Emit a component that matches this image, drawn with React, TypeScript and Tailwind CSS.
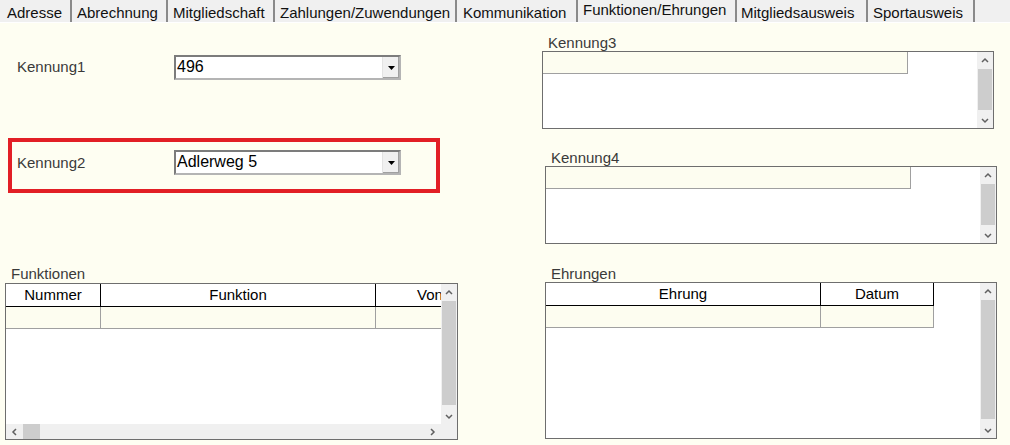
import React from 'react';

const tabs = [
  { label: 'Adresse', w: 'w-[72px]', pl: 'pl-[7px]' },
  { label: 'Abrechnung', w: 'w-[96px]', pl: 'pl-[5px]' },
  { label: 'Mitgliedschaft', w: 'w-[107px]', pl: 'pl-[5px]' },
  { label: 'Zahlungen/Zuwendungen', w: 'w-[182px]', pl: 'pl-[5px]' },
  { label: 'Kommunikation', w: 'w-[121px]', pl: 'pl-[6px]' },
  { label: 'Funktionen/Ehrungen', w: 'w-[159px]', pl: 'pl-[5px]', active: true },
  { label: 'Mitgliedsausweis', w: 'w-[131px]', pl: 'pl-[4px]' },
  { label: 'Sportausweis', w: 'w-[107px]', pl: 'pl-[5px]' },
];

const Chevron = ({ dir }: { dir: 'up' | 'down' | 'left' | 'right' }) => {
  const d = {
    up: 'M1 5 L4 2 L7 5',
    down: 'M1 2 L4 5 L7 2',
    left: 'M5 1 L2 4 L5 7',
    right: 'M2 1 L5 4 L2 7',
  }[dir];
  const size = dir === 'up' || dir === 'down' ? 'w-[8px] h-[7px]' : 'w-[7px] h-[8px]';
  return (
    <svg className={size} viewBox={dir === 'up' || dir === 'down' ? '0 0 8 7' : '0 0 7 8'} fill="none">
      <path d={d} stroke="#606060" strokeWidth={1.5} />
    </svg>
  );
};

// vertical scrollbar with arrows and a thumb
const VScroll = ({ thumb, gapTop = 'h-[1px]' }: { thumb: string; gapTop?: string }) => (
  <div className="flex w-[16px] shrink-0 flex-col bg-[#f0f0f0]">
    <div className="flex h-[16px] items-center justify-center">
      <Chevron dir="up" />
    </div>
    <div className={gapTop} />
    <div className={`mx-[1px] bg-[#cdcdcd] ${thumb}`} />
    <div className="flex-1" />
    <div className="flex h-[16px] items-center justify-center">
      <Chevron dir="down" />
    </div>
  </div>
);

const Combo = ({ value }: { value: string }) => (
  <div className="flex h-[25px] w-[227px] border-2 border-t-[#7c7c7c] border-l-[#7c7c7c] border-b-[#b4b4b4] border-r-[#b4b4b4] bg-white">
    <div className="flex-1 pl-[1px] text-[16px] leading-[20px] text-black">{value}</div>
    <div className="flex w-[17px] items-center justify-center border-l border-[#e3e3e3] bg-[#f0f0f0] shadow-[inset_-1px_-1px_0_#a0a0a0]">
      <svg className="h-[4px] w-[7px]" viewBox="0 0 7 4">
        <path d="M0 0 H7 L3.5 4 Z" fill="#000" />
      </svg>
    </div>
  </div>
);

const Caption = ({ text, cls }: { text: string; cls: string }) => (
  <div className={`text-[15px] leading-[17px] text-[#3a3a3a] ${cls}`}>{text}</div>
);

const KennungList = ({ cls }: { cls: string }) => (
  <div className={`flex h-[78px] w-[452px] border border-[#6e6e6e] bg-white ${cls}`}>
    <div className="flex-1">
      <div className="h-[22px] w-[365px] border-r border-b border-[#a0a0a0] bg-[#fdfdf0]" />
    </div>
    <VScroll thumb="h-[41px]" gapTop="h-[1px]" />
  </div>
);

export default function App() {
  return (
    <div
      className="h-[445px] w-[1010px] overflow-hidden bg-[#fefef2]"
      style={{ fontFamily: '"Liberation Sans", Arial, sans-serif' }}
    >
      {/* tab strip */}
      <div className="flex h-[23px] border-b border-white bg-[#f0f0f0]">
        {tabs.map((t) => (
          <div
            key={t.label}
            className={`${t.w} ${t.pl} flex h-[22px] shrink-0 border-r-2 border-r-[#8a8a8a] text-[15px] text-[#111] ${
              t.active ? 'items-start pt-[1px] leading-[17px]' : 'items-center pt-[2px] leading-[17px]'
            }`}
          >
            {t.label}
          </div>
        ))}
      </div>

      <div className="flex">
        {/* left column */}
        <div className="w-[542px] shrink-0">
          <div className="mt-[32px] flex h-[25px] items-center">
            <div className="w-[174px] pl-[17px] text-[15px] text-[#3a3a3a]">Kennung1</div>
            <Combo value="496" />
          </div>

          <div className="ml-[8px] mt-[58px] flex h-[55px] w-[432px] items-start border-4 border-[#e21f26] pt-[8px]">
            <div className="w-[162px] pl-[5px] pt-[4px] text-[15px] leading-[17px] text-[#3a3a3a]">Kennung2</div>
            <Combo value="Adlerweg 5" />
          </div>

          <Caption text="Funktionen" cls="mt-[72px] pl-[11px]" />
          <div className="ml-[5px] mt-[1px] flex h-[157px] w-[453px] flex-col border border-[#6e6e6e] bg-white">
            <div className="flex flex-1">
              <div className="flex-1 overflow-hidden">
                <div className="flex h-[23px] border-b border-black text-[15px] leading-[22px] text-black">
                  <div className="w-[95px] shrink-0 border-r border-black text-center">Nummer</div>
                  <div className="w-[275px] shrink-0 border-r border-black text-center">Funktion</div>
                  <div className="w-[90px] shrink-0 pl-[41px]">Von</div>
                </div>
                <div className="flex h-[22px] border-b border-[#a0a0a0] bg-[#fdfdf0]">
                  <div className="w-[95px] shrink-0 border-r border-[#a0a0a0]" />
                  <div className="w-[275px] shrink-0 border-r border-[#a0a0a0]" />
                  <div className="flex-1" />
                </div>
              </div>
              <VScroll thumb="h-[104px]" />
            </div>
            <div className="flex h-[15px] bg-[#f0f0f0]">
              <div className="flex w-[17px] items-center justify-center">
                <Chevron dir="left" />
              </div>
              <div className="w-[17px] bg-[#cdcdcd]" />
              <div className="flex-1" />
              <div className="flex w-[17px] items-center justify-center">
                <Chevron dir="right" />
              </div>
              <div className="w-[16px]" />
            </div>
          </div>
        </div>

        {/* right column */}
        <div className="flex-1">
          <Caption text="Kennung3" cls="mt-[11px] pl-[6px]" />
          <KennungList cls="mt-[0px]" />

          <Caption text="Kennung4" cls="mt-[20px] pl-[9px]" />
          <KennungList cls="ml-[3px] mt-[0px]" />

          <Caption text="Ehrungen" cls="mt-[21px] pl-[9px]" />
          <div className="ml-[3px] mt-[0px] flex h-[157px] w-[452px] border border-[#6e6e6e] bg-white">
            <div className="flex-1">
              <div className="flex h-[23px] text-[15px] leading-[22px] text-black">
                <div className="w-[275px] shrink-0 border-r border-b border-black text-center">Ehrung</div>
                <div className="w-[113px] shrink-0 border-r border-b border-black text-center">Datum</div>
              </div>
              <div className="flex h-[22px] w-[388px] border-b border-r border-[#a0a0a0] bg-[#fdfdf0]">
                <div className="w-[275px] shrink-0 border-r border-[#a0a0a0]" />
              </div>
            </div>
            <VScroll thumb="h-[119px]" />
          </div>
        </div>
      </div>
    </div>
  );
}
